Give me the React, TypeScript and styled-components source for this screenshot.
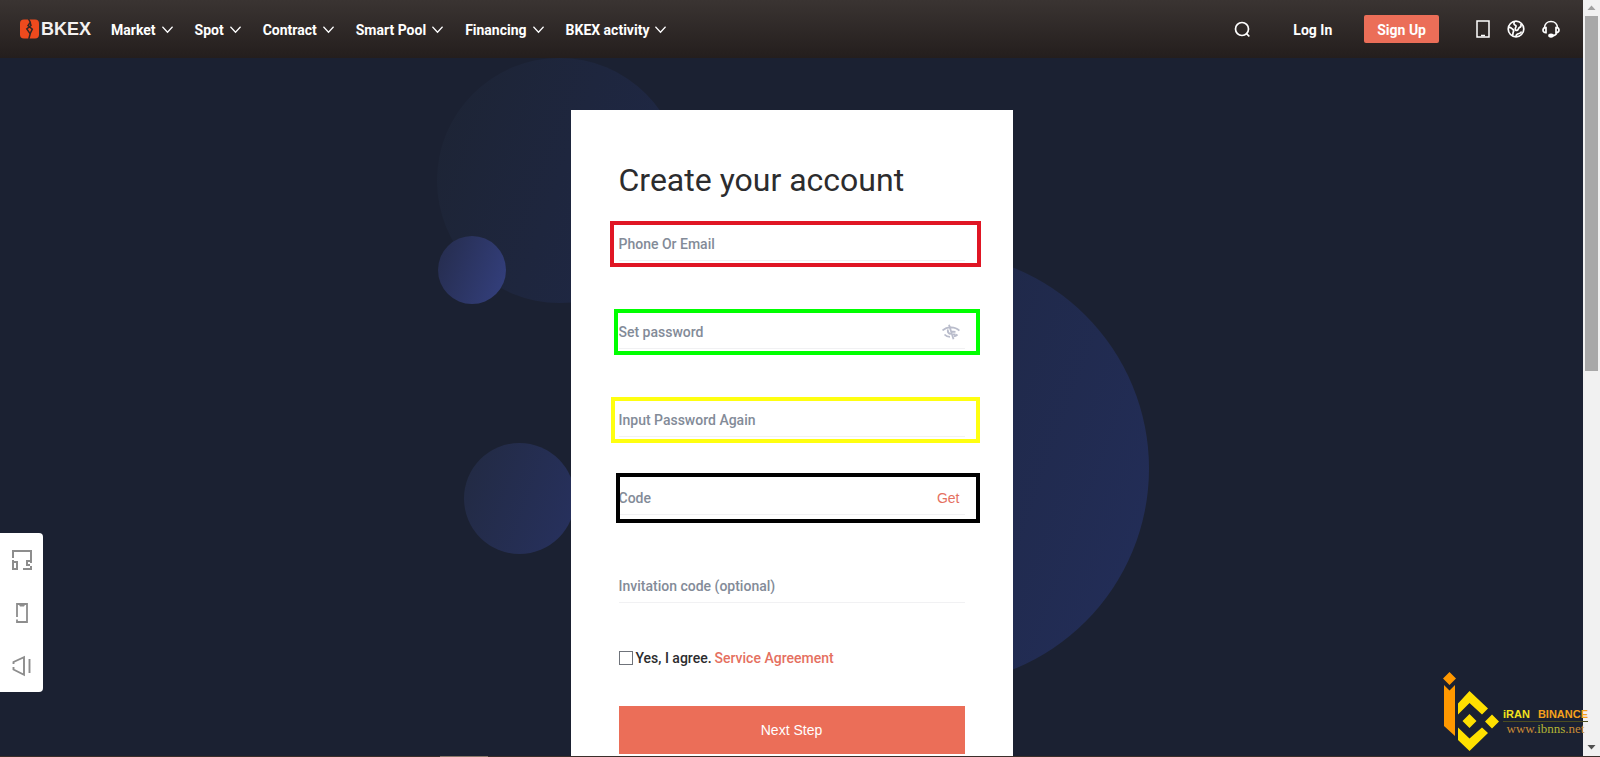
import React from 'react';
import styled, { createGlobalStyle } from 'styled-components';

const GlobalStyle = createGlobalStyle`
  *, *::before, *::after { box-sizing: border-box; }
  body {
    margin: 0;
    background: #1b2132;
    font-family: Roboto, "Liberation Sans", sans-serif;
    font-size: 14px;
    color: #2c2c2e;
  }
  button, input { font: inherit; }
`;

const Window = styled.div`
  position: relative;
  display: grid;
  grid-template-columns: minmax(0, 1fr) 17px;
  grid-template-rows: 1fr 1px;
  min-height: 100vh;
  overflow: hidden;
`;

const Page = styled.div`
  position: relative;
  display: flex;
  flex-direction: column;
`;

const Header = styled.header`
  position: relative;
  z-index: 1;
  display: flex;
  align-items: center;
  height: 58px;
  padding: 0 23px 0 20px;
  background: linear-gradient(#3a3432, #241e1d);
`;

const Logo = styled.a`
  display: flex;
  align-items: center;
  gap: 2px;
  margin-right: 20px;
  color: #f4f1f0;
  font: bold 18px/20px "Liberation Sans", sans-serif;
  text-decoration: none;
`;

const Nav = styled.nav`
  display: flex;
  align-items: center;
  gap: 22px;
  margin-right: auto;
`;

const NavButton = styled.button`
  display: flex;
  align-items: center;
  gap: 6px;
  padding: 2px 0 0;
  border: 0;
  background: none;
  color: #fff;
  font-weight: 700;
  line-height: 20px;
  white-space: nowrap;
  cursor: pointer;
`;

const IconButton = styled.button`
  display: flex;
  padding: 0;
  border: 0;
  background: none;
  color: inherit;
  cursor: pointer;
`;

const RevealButton = styled(IconButton)`
  color: #b9bccb;
`;

const Account = styled.div`
  display: flex;
  align-items: center;
  color: #fff;
`;

const LoginLink = styled.a`
  margin: 2px 32px 0 42px;
  color: #fff;
  font-weight: 700;
  line-height: 20px;
  text-decoration: none;
`;

const SignUpLink = styled.a`
  margin-right: 37px;
  padding: 5px 13px 3px;
  border-radius: 2px;
  background: #eb6e58;
  color: #fff;
  font-weight: 700;
  line-height: 20px;
  text-decoration: none;
`;

const Tools = styled.div`
  display: flex;
  align-items: center;
  gap: 17px;
`;

const Main = styled.main`
  position: relative;
  flex: 1;
  display: flex;
  justify-content: center;
  padding-top: 52px;
  overflow: hidden;
`;

const Orb = styled.span<{ $x: number; $y: number; $size: number; $from: string; $to: string }>`
  position: absolute;
  left: calc(50% + ${p => p.$x}px);
  top: ${p => p.$y}px;
  width: ${p => p.$size}px;
  height: ${p => p.$size}px;
  border-radius: 50%;
  background: linear-gradient(110deg, ${p => p.$from}, ${p => p.$to});
`;

const Card = styled.form`
  position: relative;
  display: flex;
  flex-direction: column;
  width: 442px;
  padding: 50px 48px 2px;
  background: #fff;
`;

const Title = styled.h1`
  margin: 0 0 27px;
  font-size: 32px;
  font-weight: 400;
  line-height: 40px;
`;

const Fields = styled.div`
  display: flex;
  flex-direction: column;
  gap: 54px;
`;

const FieldGroup = styled.div`
  display: flex;
  flex-direction: column;
  gap: 44px;
`;

const Field = styled.div`
  position: relative;
  display: flex;
  align-items: center;
  height: 34px;
  padding-right: 5px;
  border-bottom: 1px solid #f1f1f3;
`;

const Input = styled.input`
  flex: 1;
  min-width: 0;
  height: 32px;
  padding: 1px 0 0;
  border: 0;
  outline: 0;
  background: none;
  color: #2c2c2e;
  font-weight: 500;
  &::placeholder { color: #838b98; opacity: 1; }
`;

const Highlight = styled.span<{ $color: string; $left: number; $right: number; $y?: number }>`
  position: absolute;
  top: ${p => -(p.$y ?? 6)}px;
  bottom: ${p => -(p.$y ?? 6) - 1}px;
  left: ${p => -p.$left}px;
  right: ${p => -p.$right}px;
  border: 4px solid ${p => p.$color};
  pointer-events: none;
`;

const GetButton = styled.button`
  padding: 0;
  border: 0;
  background: none;
  color: #e5705f;
  font-family: "Liberation Sans", sans-serif;
  cursor: pointer;
`;

const Agreement = styled.div`
  display: flex;
  align-items: center;
  gap: 3px;
  margin: 45px 0 38px;
  font-weight: 500;
  line-height: 20px;
  a { color: #e5705f; text-decoration: none; }
`;

const Checkbox = styled.input`
  appearance: none;
  width: 14px;
  height: 14px;
  margin: 0;
  border: 1px solid #6f737a;
  background: #fff;
  &:checked { background: #eb6e58; }
`;

const SubmitButton = styled.button`
  height: 48px;
  border: 0;
  background: #eb6e58;
  color: #fff;
  font-family: "Liberation Sans", sans-serif;
  cursor: pointer;
`;

const SideDock = styled.aside`
  position: absolute;
  left: 0;
  bottom: 64px;
  display: flex;
  flex-direction: column;
  align-items: center;
  gap: 31px;
  width: 43px;
  padding: 16px 0 15px;
  border-radius: 0 4px 4px 0;
  background: #fff;
  color: #8d8d8d;
`;

const Scrollbar = styled.div`
  display: flex;
  flex-direction: column;
  align-items: center;
  background: #f1f1f1;
`;

const ScrollArrow = styled.svg`
  width: 17px;
  height: 16px;
  flex: none;
`;

const ScrollThumb = styled.span`
  width: 13px;
  height: 47%;
  margin-bottom: auto;
  background: #a8a8a8;
`;

const Taskbar = styled.footer`
  grid-column: 1 / -1;
  background: linear-gradient(90deg, #3b2f2a 440px, #8a7768 440px, #8a7768 488px, #3b2f2a 488px);
`;

const Watermark = styled.div`
  position: absolute;
  right: 12px;
  bottom: 5px;
  display: flex;
  align-items: center;
  gap: 4px;
`;

const WatermarkText = styled.div`
  display: flex;
  flex-direction: column;
  padding-top: 18px;
  white-space: nowrap;
`;

const Brand = styled.span`
  display: flex;
  justify-content: space-between;
  gap: 8px;
  border-bottom: 1px solid #4b4c20;
  color: #f5a11c;
  font: bold 11px/14px "Liberation Sans", sans-serif;
  em { color: #f4e31c; font-style: normal; }
`;

const Site = styled.span`
  color: #c98a35;
  text-align: center;
  font: 13px/13px "Liberation Serif", serif;
  em { color: #b4b535; font-style: normal; }
`;

const line = { fill: 'none', stroke: 'currentColor' } as const;

const Chevron = () => (
  <svg width="11" height="8" viewBox="0 0 11 8" {...line} strokeWidth="1.3">
    <path d="M.4.8 5.5 6.200 10.600.8" />
  </svg>
);

const LogoMark = () => (
  <svg width="19" height="20" viewBox="0 0 19 20" fill="none">
    <rect width="19" height="19" y=".5" rx="4" fill="#ee4a1d" />
    <path stroke="#2e2725" strokeWidth="1.500" d="M8.500 0 10.300 3.200 8 6.500l4.300 3.700-2.300 4.600M10.300 4 11 6.500 6.800 10l3.400 4.800L8.800 20" />
  </svg>
);

const SearchIcon = () => (
  <svg width="17" height="17" viewBox="0 0 17 17" {...line} strokeWidth="1.7">
    <circle cx="8" cy="8" r="6.500" />
    <path d="m12.300 12.300 3 3.200" />
  </svg>
);

const TabletIcon = () => (
  <svg width="14" height="18" viewBox="0 0 14 18" {...line} strokeWidth="1.500">
    <path d="M1 1h12v16H1Z" />
    <path d="M5 15.500h4" />
  </svg>
);

const GlobeIcon = () => (
  <svg width="18" height="18" viewBox="0 0 18 18" {...line} strokeWidth="1.700">
    <circle cx="9" cy="9" r="7.800" />
    <path d="M1.500 7.500c2.500-.3 3 .8 4 1.500 1.400 1 1.500 2 .8 3-.5.8-.2 2.500-.8 3.500" />
    <path d="M7.500 1.500C6 4 7.500 5 8.500 5.300c1.200.5.200 2-.2 3-.4 1.400.8 2.600 2 2 1.300-.6.800-2.300 2.400-2.900 1.500-.5 1.500-2 1.300-3.400M9 16.500c0-2 1.500-2.800 3-3 1.500-.2 2.200-1 2.500-2" />
  </svg>
);

const HeadsetIcon = () => (
  <svg width="18" height="18" viewBox="0 0 18 18" {...line} strokeWidth="1.700">
    <path d="M2.500 8C2.500 4 5.400 1.500 9 1.500S15.500 4 15.500 8" />
    <path d="M4 7.500v5.200C2 12.700 1 11.600 1 10.100s1-2.600 3-2.600ZM14 7.500v5.200c2 0 3-1.100 3-2.600s-1-2.600-3-2.600ZM14.800 13c-.6 1.600-2 2.500-4 2.600" />
    <ellipse cx="9" cy="15.600" rx="2" ry="1.200" fill="currentColor" />
  </svg>
);

const HiddenEyeIcon = () => (
  <svg width="18" height="16" viewBox="0 0 18 16" {...line} strokeWidth="1.800">
    <path d="M.6 6.500C3 4 5.500 3.300 9 3.300s6 .9 8.400 3.400M2.500 10.500c1.500 1.600 3.200 2.300 5.500 2.300M12 12.500c1.400-.4 2.500-1 3.500-2M7 .8l4.500 14.400M6 5.500c-.5 2 .5 4 2.800 4.600M9.500 7.500l4 .3M11 10.300h2.500" />
  </svg>
);

const DockHeadset = () => (
  <svg width="22" height="22" viewBox="0 0 22 22" {...line} strokeWidth="2">
    <path d="M2 9V2h18v12M2 11v9h4v-7H2M20 12h-4v4h3M20 17v3h-8" />
  </svg>
);

const DockPhone = () => (
  <svg width="14" height="22" viewBox="0 0 14 22" {...line} strokeWidth="1.800">
    <path d="M2 15V2h10v18H2v-2.500M4.500 2l1 1.500h3l1-1.500" />
  </svg>
);

const DockSpeaker = () => (
  <svg width="20" height="22" viewBox="0 0 20 22" {...line} strokeWidth="1.900">
    <path d="M1.500 9V7L12 2.200v17.600L1.500 14.500V12M17.500 4v14" />
  </svg>
);

const BinanceMark = () => (
  <svg width="56" height="80" viewBox="0 0 56 80">
    <path fill="#ff9800" d="m6.500 0 6.500 6.500-6.500 6.500L0 6.500ZM1 13l5.500 5.500L12 13v51L1 54Z" />
    <path fill="#ffe000" d="M15 31.500 26.500 19 45 36.500l-6 6L26.500 31 15 42.500ZM15 55.500l11.500 11L39 55.500l6 5.500-18.500 18L15 68ZM26.500 42l7 7-7 7-7-7ZM49 42.500l7 7-7 7-7-7Z" />
  </svg>
);

const menu = ['Market', 'Spot', 'Contract', 'Smart Pool', 'Financing', 'BKEX activity'];

export default function App() {
  return (
    <Window>
      <GlobalStyle />
      <Page>
        <Header>
          <Logo href="#"><LogoMark />BKEX</Logo>
          <Nav>
            {menu.map(item => (
              <NavButton key={item} type="button">{item}<Chevron /></NavButton>
            ))}
          </Nav>
          <Account>
            <IconButton type="button" aria-label="Search"><SearchIcon /></IconButton>
            <LoginLink href="#">Log In</LoginLink>
            <SignUpLink href="#">Sign Up</SignUpLink>
            <Tools>
              <IconButton type="button" aria-label="Mobile app"><TabletIcon /></IconButton>
              <IconButton type="button" aria-label="Language"><GlobeIcon /></IconButton>
              <IconButton type="button" aria-label="Support"><HeadsetIcon /></IconButton>
            </Tools>
          </Account>
        </Header>
        <Main>
          <Orb $x={-355} $y={0} $size={245} $from="#1d2434" $to="#1f2848" />
          <Orb $x={-354} $y={178} $size={68} $from="#252c4c" $to="#34407f" />
          <Orb $x={-328} $y={385} $size={111} $from="#222a42" $to="#27315f" />
          <Orb $x={-76} $y={194} $size={433} $from="#1c2439" $to="#232e5a" />
          <Card onSubmit={e => e.preventDefault()}>
            <Title>Create your account</Title>
            <Fields>
              <Field>
                <Input aria-label="Phone Or Email" placeholder="Phone Or Email" />
                <Highlight $color="#e01624" $left={9} $right={16} />
              </Field>
              <Field>
                <Input type="password" aria-label="Set password" placeholder="Set password" />
                <RevealButton type="button" aria-label="Show password"><HiddenEyeIcon /></RevealButton>
                <Highlight $color="#00ff00" $left={5} $right={15} />
              </Field>
              <FieldGroup>
                <Field>
                  <Input type="password" aria-label="Input Password Again" placeholder="Input Password Again" />
                  <Highlight $color="#ffff10" $left={8} $right={15} />
                </Field>
                <Field>
                  <Input aria-label="Code" placeholder="Code" />
                  <GetButton type="button">Get</GetButton>
                  <Highlight $color="#000" $left={3} $right={15} $y={8} />
                </Field>
              </FieldGroup>
              <Field>
                <Input aria-label="Invitation code (optional)" placeholder="Invitation code (optional)" />
              </Field>
            </Fields>
            <Agreement>
              <Checkbox type="checkbox" id="agree" />
              <label htmlFor="agree">Yes, I agree.</label>
              <a href="#">Service Agreement</a>
            </Agreement>
            <SubmitButton type="submit">Next Step</SubmitButton>
          </Card>
        </Main>
        <SideDock>
          <IconButton type="button" aria-label="Customer service"><DockHeadset /></IconButton>
          <IconButton type="button" aria-label="Download app"><DockPhone /></IconButton>
          <IconButton type="button" aria-label="Announcements"><DockSpeaker /></IconButton>
        </SideDock>
      </Page>
      <Scrollbar aria-hidden="true">
        <ScrollArrow viewBox="0 0 17 16"><path fill="#a0a0a0" d="m4.500 10 4-4.500 4 4.500Z" /></ScrollArrow>
        <ScrollThumb />
        <ScrollArrow viewBox="0 0 17 16"><path fill="#505050" d="m4.500 5 4 4.500 4-4.500Z" /></ScrollArrow>
      </Scrollbar>
      <Taskbar />
      <Watermark>
        <BinanceMark />
        <WatermarkText>
          <Brand><em>iRAN</em><span>BINANCE</span></Brand>
          <Site>www.<em>ibnns</em>.net</Site>
        </WatermarkText>
      </Watermark>
    </Window>
  );
}
